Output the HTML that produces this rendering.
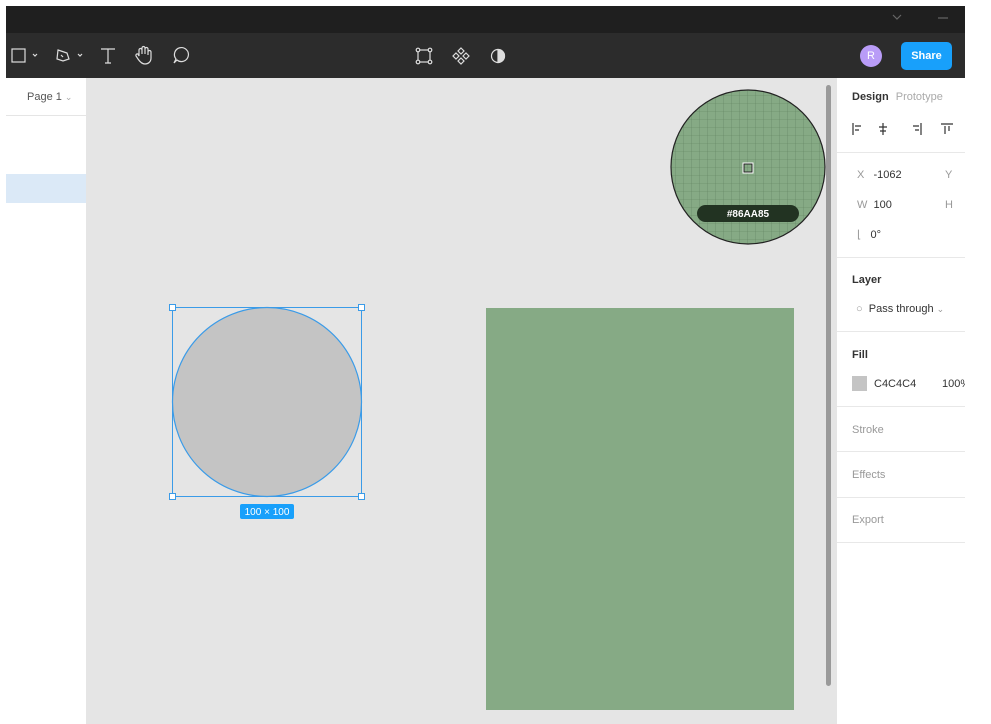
<!DOCTYPE html>
<html><head><meta charset="utf-8"><style>
*{margin:0;padding:0;box-sizing:border-box}
body{width:991px;height:724px;background:#fff;position:relative;overflow:hidden;font-family:"Liberation Sans",sans-serif}
.a{position:absolute}
.t{font-size:11px;color:#333}
.g{color:#999}
.hr{position:absolute;left:837px;width:128px;height:1px;background:#e8e8e8}
</style></head><body>
<div class="a" style="left:6px;top:6px;width:959px;height:28px;background:#1f1f1f"></div>
<div class="a" style="left:6px;top:33px;width:959px;height:45px;background:#2c2c2c"></div>
<svg class="a" style="left:6px;top:6px" width="959" height="72" viewBox="0 0 959 72" fill="none" stroke="#ddd" stroke-width="1.2">
<path d="M887 9l4 4 4-4" stroke="#666"/><path d="M932 12h10" stroke="#666"/>
<rect x="6" y="43" width="13" height="13"/><path d="M27 48l2 2 2-2"/>
<path d="M52 44l9 3 2 6-6 2-6-2z M55 49l2 2"/><path d="M72 48l2 2 2-2"/>
<path d="M95 43h14M102 43v14M99 57h6"/>
<path d="M133 50v-6a1.5 1.5 0 013 0v4-6a1.5 1.5 0 013 0v6-5a1.5 1.5 0 013 0v6-3a1.5 1.5 0 013 0v6c0 4-3 6-6 6s-5-2-7-5l-2-3a1.5 1.5 0 012-2z"/>
<path d="M168 57l2-4a7 7 0 111 1z"/>
<rect x="412" y="44" width="12" height="12"/><circle cx="412" cy="44" r="1.8" fill="#2c2c2c"/><circle cx="424" cy="44" r="1.8" fill="#2c2c2c"/><circle cx="412" cy="56" r="1.8" fill="#2c2c2c"/><circle cx="424" cy="56" r="1.8" fill="#2c2c2c"/>
<path d="M455 42l3 3-3 3-3-3zM455 52l3 3-3 3-3-3zM450 47l3 3-3 3-3-3zM460 47l3 3-3 3-3-3z"/>
<circle cx="492" cy="50" r="6.5"/><path d="M492 43.5a6.5 6.5 0 010 13z" fill="#ddd"/>
</svg>
<div class="a" style="left:860px;top:45px;width:22px;height:22px;border-radius:50%;background:#b99cf7;color:#fff;font-size:11px;text-align:center;line-height:22px">R</div>
<div class="a" style="left:901px;top:42px;width:51px;height:28px;border-radius:5px;background:#18a0fb;color:#fff;font-size:11px;font-weight:bold;text-align:center;line-height:28px">Share</div>
<div class="a" style="left:6px;top:78px;width:80px;height:646px;background:#fff"></div>
<div class="a t" style="left:27px;top:91px;color:#555">Page 1 <span style="color:#aaa;font-size:9px">⌄</span></div>
<div class="a" style="left:6px;top:115px;width:80px;height:1px;background:#e5e5e5"></div>
<div class="a" style="left:6px;top:174px;width:80px;height:29px;background:#dbe9f7"></div>
<div class="a" style="left:86px;top:78px;width:751px;height:646px;background:#e5e5e5"></div>
<div class="a" style="left:826px;top:85px;width:5px;height:601px;border-radius:3px;background:#9a9a9a"></div>
<div class="a" style="left:486px;top:308px;width:308px;height:402px;background:#86aa85"></div>
<svg class="a" style="left:160px;top:295px" width="220" height="230">
<circle cx="107" cy="107" r="94.5" fill="#c4c4c4" stroke="#3a9be8" stroke-width="1.2"/>
<rect x="12.5" y="12.5" width="189" height="189" fill="none" stroke="#3a9be8" stroke-width="1"/>
<g fill="#fff" stroke="#3a9be8"><rect x="9.5" y="9.5" width="6" height="6"/><rect x="198.5" y="9.5" width="6" height="6"/><rect x="9.5" y="198.5" width="6" height="6"/><rect x="198.5" y="198.5" width="6" height="6"/></g>
<rect x="80" y="209" width="54" height="15" rx="2" fill="#18a0fb"/>
<text x="107" y="220" text-anchor="middle" font-size="10" fill="#fff" font-family="Liberation Sans">100 × 100</text>
</svg>
<svg class="a" style="left:668px;top:88px" width="160" height="160">
<defs><pattern id="p" width="8" height="8" patternUnits="userSpaceOnUse" x="0" y="0"><path d="M8 0V8H0" fill="none" stroke="#5f7f5e" stroke-width="0.6"/></pattern><clipPath id="c"><circle cx="80" cy="79" r="77"/></clipPath></defs>
<circle cx="80" cy="79" r="77" fill="#86aa85"/>
<rect width="160" height="160" fill="url(#p)" clip-path="url(#c)"/>
<circle cx="80" cy="79" r="77" fill="none" stroke="#222" stroke-width="1.2"/>
<rect x="75" y="75" width="10" height="10" fill="none" stroke="#fff" stroke-width="1"/><rect x="76" y="76" width="8" height="8" fill="none" stroke="#222"/>
<rect x="29" y="117" width="102" height="17" rx="8.5" fill="#223322"/>
<text x="80" y="129" text-anchor="middle" font-size="10" font-weight="bold" fill="#fff" font-family="Liberation Sans">#86AA85</text>
</svg>
<div class="a" style="left:837px;top:78px;width:128px;height:646px;background:#fff"></div>
<div class="a t" style="left:852px;top:91px;font-weight:bold">Design <span style="font-weight:normal;color:#aaa;margin-left:4px">Prototype</span></div>
<svg class="a" style="left:850px;top:120px" width="115" height="18" fill="none" stroke="#333" stroke-width="1.2">
<path d="M3 3v12M5 6h6M5 10h4"/><path d="M33 3v12M29 7h8M30 11h6"/><path d="M71 3v12M63 6h6M65 10h4"/><path d="M91 4h12M95 6v8M99 6v5"/>
</svg>
<div class="hr" style="top:152px"></div>
<div class="a t" style="left:857px;top:169px"><span class="g">X</span>&nbsp;&nbsp;&nbsp;-1062</div><div class="a t g" style="left:945px;top:169px">Y</div>
<div class="a t" style="left:857px;top:199px"><span class="g">W</span>&nbsp;&nbsp;100</div><div class="a t g" style="left:945px;top:199px">H</div>
<div class="a t" style="left:857px;top:228px"><span class="g">⌊</span>&nbsp;&nbsp;&nbsp;0°</div>
<div class="hr" style="top:257px"></div>
<div class="a t" style="left:852px;top:274px;font-weight:bold">Layer</div>
<div class="a t" style="left:856px;top:303px"><span class="g">○</span>&nbsp;&nbsp;Pass through <span class="g" style="font-size:9px">⌄</span></div>
<div class="hr" style="top:331px"></div>
<div class="a t" style="left:852px;top:349px;font-weight:bold">Fill</div>
<div class="a" style="left:852px;top:376px;width:15px;height:15px;background:#c4c4c4"></div>
<div class="a t" style="left:874px;top:378px">C4C4C4</div><div class="a t" style="left:942px;top:378px">100%</div>
<div class="hr" style="top:406px"></div>
<div class="a t g" style="left:852px;top:424px">Stroke</div>
<div class="hr" style="top:451px"></div>
<div class="a t g" style="left:852px;top:469px">Effects</div>
<div class="hr" style="top:497px"></div>
<div class="a t g" style="left:852px;top:514px">Export</div>
<div class="hr" style="top:542px"></div>
<div class="a" style="left:965px;top:0;width:26px;height:724px;background:#fff"></div>
</body></html>
